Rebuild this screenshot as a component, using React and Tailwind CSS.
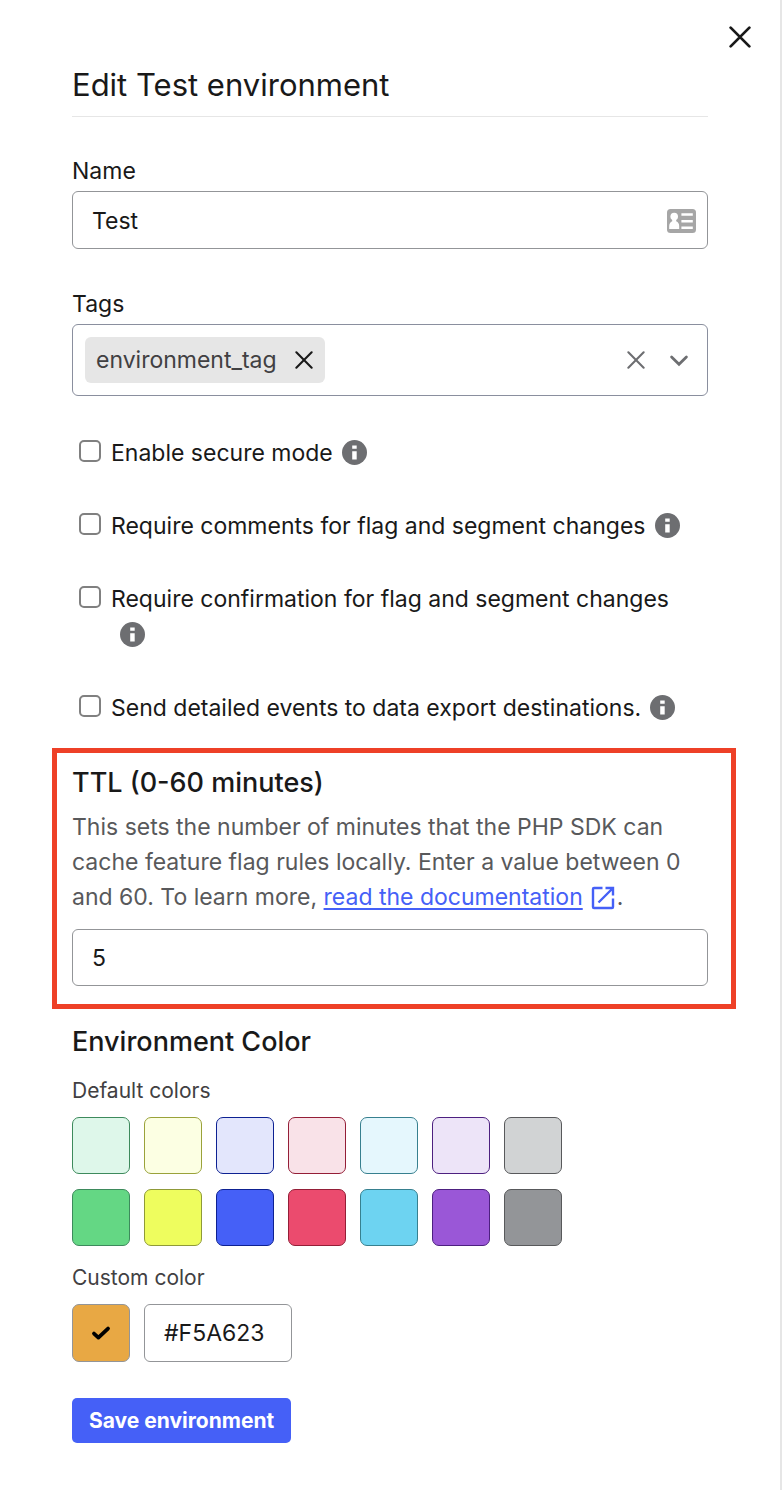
import React, { useState } from "react";

const defaultColors = [
  { name: "Light green", style: "bg-[#def7ea] border-[#3d8a5c]" },
  { name: "Light yellow", style: "bg-[#fcffe3] border-[#9aa23a]" },
  { name: "Light blue", style: "bg-[#e3e6fc] border-[#0d2192]" },
  { name: "Light red", style: "bg-[#f9e2e8] border-[#941e37]" },
  { name: "Light cyan", style: "bg-[#e5f7fd] border-[#37808f]" },
  { name: "Light purple", style: "bg-[#ede4f8] border-[#4d2080]" },
  { name: "Light gray", style: "bg-[#d1d3d4] border-[#58595b]" },
  { name: "Green", style: "bg-[#64d784] border-[#3d8a5c]" },
  { name: "Yellow", style: "bg-[#eefd5e] border-[#8f9a38]" },
  { name: "Blue", style: "bg-[#4560f7] border-[#0d2192]" },
  { name: "Red", style: "bg-[#eb4b6e] border-[#941e37]" },
  { name: "Cyan", style: "bg-[#6dd3f1] border-[#37808f]" },
  { name: "Purple", style: "bg-[#9a57d7] border-[#4d2080]" },
  { name: "Gray", style: "bg-[#939598] border-[#58595b]" },
];

const options = [
  { id: "secure-mode", label: "Enable secure mode" },
  { id: "require-comments", label: "Require comments for flag and segment changes" },
  { id: "require-confirmation", label: "Require confirmation for flag and segment changes" },
  { id: "detailed-events", label: "Send detailed events to data export destinations." },
];

function Cross({ className, width }) {
  return (
    <svg viewBox="0 0 20 20" className={className} fill="none" stroke="currentColor" strokeWidth={width} strokeLinecap="round" aria-hidden="true">
      <path d="M1.5 1.5 18.5 18.5M18.5 1.5 1.5 18.5" />
    </svg>
  );
}

function InfoIcon() {
  return (
    <svg viewBox="0 0 24 24" className="size-[25px]" aria-hidden="true">
      <circle cx="12" cy="12" r="12" fill="#6d6e71" />
      <path d="M9.8 5.2h4.3v3.2H9.8zM9.8 10.8h4.3v7.9H9.8z" fill="#fff" />
    </svg>
  );
}

function ContactCardIcon() {
  return (
    <svg viewBox="0 0 29 24" className="h-6 w-[29px]" aria-hidden="true">
      <rect width="29" height="24" rx="3.5" fill="#a6a6a6" />
      <g fill="#fff">
        <circle cx="7.2" cy="7.6" r="3.8" />
        <path d="M5.2 10h4v2.2c2 .8 3 2.6 3 5V20H2.2v-2.8c0-2.4 1-4.2 3-5z" />
        <path d="M14.4 4.2h11.4v2.6H14.4zM14.4 10.9h11.4v2.6H14.4zM14.4 17.4h11.4V20H14.4z" />
      </g>
    </svg>
  );
}

function CheckRow({ id, label }) {
  return (
    <div className="flex items-start gap-[10px] pr-2 pl-[7px]">
      <input
        id={id}
        type="checkbox"
        className="mt-[5px] size-[22px] shrink-0 appearance-none rounded-[5px] border-2 border-[#808080] bg-white checked:bg-[#4560f7]"
      />
      <div className="text-[23px] leading-[36px]">
        <label htmlFor={id}>{label}</label>
        <button type="button" aria-label={"About: " + label} className="ml-[9px] inline-block align-[-4px] leading-none">
          <InfoIcon />
        </button>
      </div>
    </div>
  );
}

export default function App() {
  const [name, setName] = useState("Test");
  const [ttl, setTtl] = useState("5");
  const [custom, setCustom] = useState("#F5A623");

  return (
    <main className="min-h-screen border-r-2 border-[#e6e6e6] bg-white pb-[47px] font-['Inter',sans-serif] text-[#191919]">
      <div className="flex justify-end pt-[21px] pr-6">
        <button type="button" aria-label="Close" className="grid size-8 place-items-center">
          <Cross className="size-[22px]" width="2.5" />
        </button>
      </div>

      <form className="px-18" onSubmit={(e) => e.preventDefault()}>
        <h1 className="mt-3 border-b border-[#e6e6e6] pb-[11px] text-[31px] leading-10">Edit Test environment</h1>

        <div className="mt-[38px] flex flex-col gap-1">
          <label htmlFor="env-name" className="text-[23px] leading-8">Name</label>
          <div className="flex h-[58px] items-center rounded-[6px] border border-[#939598] pt-[2px] pr-[11px] pl-[19px]">
            <input
              id="env-name"
              value={name}
              onChange={(e) => setName(e.target.value)}
              className="min-w-0 flex-1 bg-transparent text-[23px] outline-none"
            />
            <ContactCardIcon />
          </div>
        </div>

        <div className="mt-[39px] flex flex-col gap-1">
          <label htmlFor="env-tags" className="text-[23px] leading-8">Tags</label>
          <div className="flex h-[72px] items-center rounded-[6px] border border-[#8a8f9e] pr-[18px] pl-3">
            <div className="flex h-[46px] items-center gap-[18px] rounded-[6px] bg-[#e6e6e6] pr-3 pl-[11px]">
              <span className="text-[23px] text-[#414042]">environment_tag</span>
              <button type="button" aria-label="Remove environment_tag">
                <Cross className="size-[18px]" width="2.3" />
              </button>
            </div>
            <input id="env-tags" className="min-w-0 flex-1 bg-transparent text-[23px] outline-none" />
            <div className="flex items-center gap-6 text-[#6d6e71]">
              <button type="button" aria-label="Clear tags">
                <Cross className="size-[18px]" width="2.3" />
              </button>
              <button type="button" aria-label="Show tags">
                <svg viewBox="0 0 20 20" className="size-5" fill="none" stroke="currentColor" strokeWidth="2.8" strokeLinecap="round" aria-hidden="true">
                  <path d="M2.6 7 10 14.2 17.4 7" />
                </svg>
              </button>
            </div>
          </div>
        </div>

        <div className="mt-[39px] flex flex-col gap-[37px]">
          {options.map((o) => (
            <CheckRow key={o.id} id={o.id} label={o.label} />
          ))}
        </div>

        <section className="mt-[22px] -mr-7 -ml-5 border-5 border-[#ee4027] pt-[14px] pr-[23px] pb-[18px] pl-[15px]">
          <label htmlFor="ttl" className="block text-[27px] leading-8 font-medium">TTL (0-60 minutes)</label>
          <p id="ttl-help" className="mt-[11px] text-[23px] leading-[35px] text-[#58595b]">
            This sets the number of minutes that the PHP SDK can cache feature flag rules locally. Enter a value between 0 and 60. To learn more,{" "}
            <a href="#docs" className="text-[#4560f7] underline decoration-2 underline-offset-3">
              read the documentation
              <svg viewBox="0 0 24 24" className="mr-[2px] ml-2 inline-block size-6 align-[-5px]" fill="none" stroke="currentColor" strokeWidth="2.4" aria-hidden="true">
                <path d="M11.5 2H3Q2 2 2 3V21Q2 22 3 22H21Q22 22 22 21V12.5M14.5 2H22V9.5M22 2 7.5 16.5" />
              </svg>
            </a>
            .
          </p>
          <input
            id="ttl"
            value={ttl}
            aria-describedby="ttl-help"
            onChange={(e) => setTtl(e.target.value)}
            className="mt-[14px] block h-[57px] w-full rounded-[6px] border border-[#939598] px-[19px] text-[23px] outline-none"
          />
        </section>

        <h2 className="mt-[17px] text-[27px] leading-8 font-medium">Environment Color</h2>
        <h3 className="mt-[19px] text-[21px] leading-7 text-[#414042]">Default colors</h3>
        <div className="mt-3 grid w-fit grid-cols-7 gap-x-[14px] gap-y-[15px]">
          {defaultColors.map((c) => (
            <button key={c.name} type="button" aria-label={c.name} className={"h-[57px] w-[58px] rounded-[7px] border " + c.style} />
          ))}
        </div>

        <label htmlFor="custom-color" className="mt-[18px] block text-[21px] leading-7 text-[#414042]">Custom color</label>
        <div className="mt-3 flex gap-[14px]">
          <button type="button" aria-label="Use custom color" className="grid size-[58px] place-items-center rounded-[7px] border border-[#939598] bg-[#e8a844]">
            <svg viewBox="0 0 20 16" className="h-4 w-5" fill="none" stroke="#000" strokeWidth="3.8" strokeLinecap="round" strokeLinejoin="round" aria-hidden="true">
              <path d="M3 8.6 7.4 12.6 17 3.6" />
            </svg>
          </button>
          <input
            id="custom-color"
            value={custom}
            onChange={(e) => setCustom(e.target.value)}
            className="h-[58px] w-[148px] rounded-[6px] border border-[#939598] px-[19px] text-[23px] outline-none"
          />
        </div>

        <button type="submit" className="mt-9 h-[45px] rounded-[5px] bg-[#4560f7] px-[17px] text-[21px] font-bold text-white">
          Save environment
        </button>
      </form>
    </main>
  );
}
